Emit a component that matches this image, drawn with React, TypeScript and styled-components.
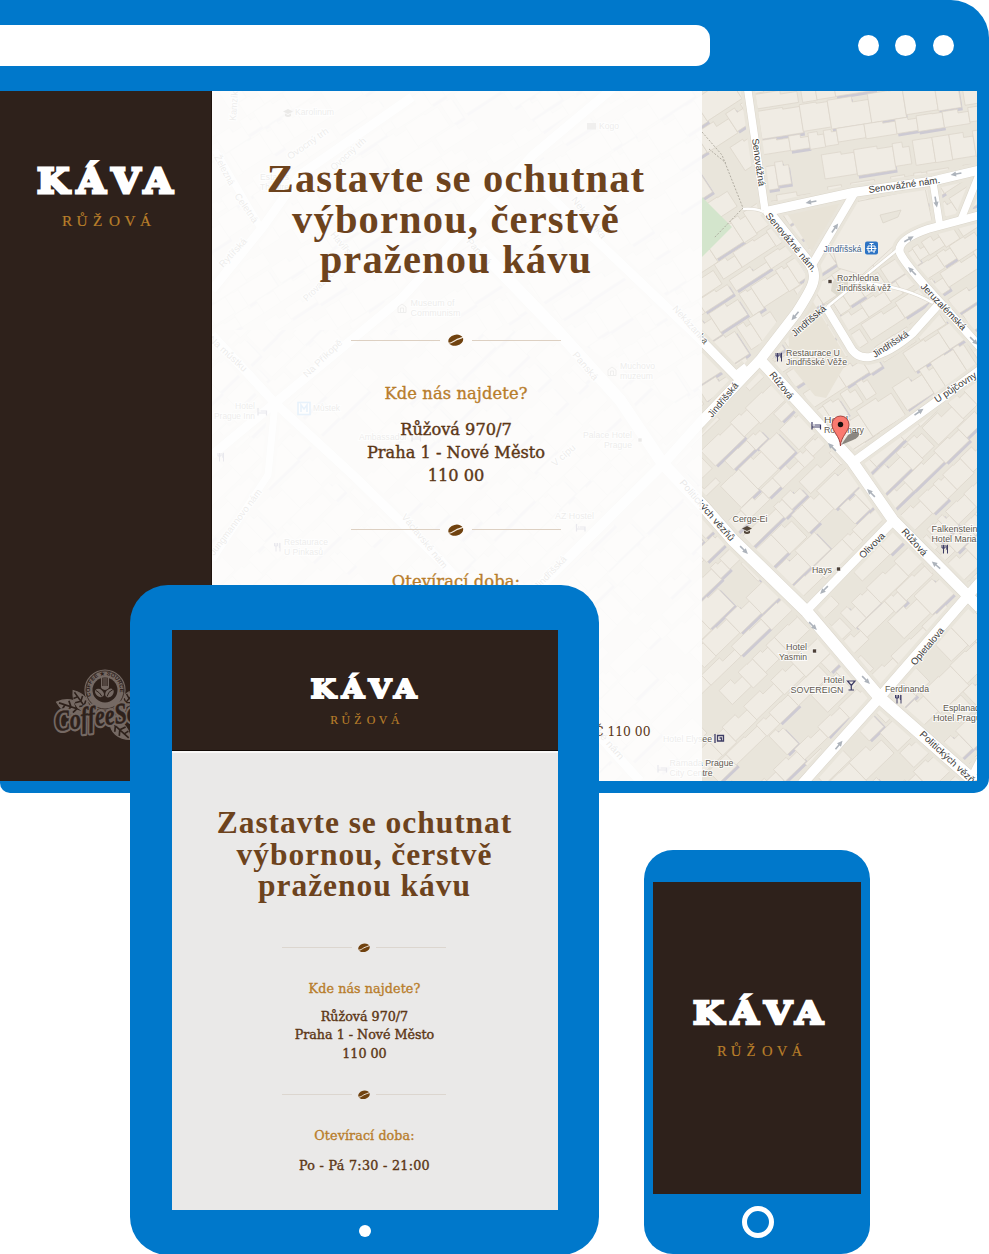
import React from 'react';
import styled, { createGlobalStyle } from 'styled-components';

const BLUE = '#0078cb';
const COFFEE = '#2e211b';
const SLAB = '"DejaVu Serif", serif';

const GlobalStyle = createGlobalStyle`
  * { box-sizing: border-box; }
  body { margin: 0; background: #fff; overflow: hidden; }
`;

const Stage = styled.main`
  position: relative;
  width: 989px;
  height: 1254px;
  overflow: hidden;
  font-family: "Liberation Serif", "Times New Roman", serif;
`;

/* ---------- desktop browser ---------- */

const Browser = styled.section`
  display: flex;
  flex-direction: column;
  width: 988.5px;
  height: 792.6px;
  padding-bottom: 11.6px;
  background: ${BLUE};
  border-radius: 0 38px 15px 10px;
`;

const Toolbar = styled.header`
  display: flex;
  flex: none;
  align-items: center;
  justify-content: space-between;
  height: 91px;
  padding: 0.6px 34.5px 0 0;
`;

const AddressBar = styled.div`
  width: 710px;
  height: 41px;
  background: #fff;
  border-radius: 0 14px 14px 0;
`;

const WindowDots = styled.div`
  display: flex;
  gap: 16.6px;
`;

const Dot = styled.span<{ $size: number }>`
  width: ${(p) => p.$size}px;
  height: ${(p) => p.$size}px;
  border-radius: 50%;
  background: #fff;
`;

const Viewport = styled.div`
  position: relative;
  display: flex;
  height: 690px;
  width: 977px;
  overflow: hidden;
`;

const Sidebar = styled.aside`
  display: flex;
  flex-direction: column;
  justify-content: space-between;
  width: 212px;
  padding: 66px 0 34px 36px;
  background: ${COFFEE};
  border-right: 1px solid #1f130d;
`;

const MapLayer = styled.svg`
  position: absolute;
  left: 212px;
  top: 0;
`;

const Panel = styled.article`
  position: relative;
  display: flex;
  flex-direction: column;
  align-items: center;
  width: 490px;
  padding: 68px 2px 0 0;
  background: rgba(254, 254, 254, 0.89);
`;

const FooterAddress = styled.p`
  position: absolute;
  right: 51.5px;
  bottom: 40px;
  margin: 0;
  font-family: ${SLAB};
  font-size: 12.3px;
  line-height: 18px;
  color: #5a3718;
  white-space: nowrap;
`;

/* ---------- shared type ---------- */

const Title = styled.h1<{ $small?: boolean }>`
  margin: 0;
  font-weight: 700;
  font-size: ${(p) => (p.$small ? 31.5 : 40.5)}px;
  line-height: ${(p) => (p.$small ? 31.3 : 40.5)}px;
  letter-spacing: ${(p) => (p.$small ? 0.95 : 1.15)}px;
  color: #6d431d;
  text-align: center;
  white-space: nowrap;
`;

const Subtitle = styled.h2<{ $small?: boolean }>`
  margin: 0;
  font-family: ${SLAB};
  font-weight: 400;
  font-size: ${(p) => (p.$small ? 12.7 : 16.3)}px;
  line-height: ${(p) => (p.$small ? 18 : 24)}px;
  letter-spacing: 0.1px;
  color: #b87d2b;
  -webkit-text-stroke: 0.35px #b87d2b;
  white-space: nowrap;
`;

const Details = styled.p<{ $small?: boolean; $top?: number; $spacing?: number }>`
  margin: ${(p) => p.$top ?? (p.$small ? 10 : 12)}px 0 0;
  font-family: ${SLAB};
  font-weight: 400;
  font-size: ${(p) => (p.$small ? 12.7 : 16.2)}px;
  line-height: ${(p) => (p.$small ? 18.2 : 23.3)}px;
  letter-spacing: ${(p) => p.$spacing ?? 0}px;
  color: #5c3716;
  -webkit-text-stroke: 0.4px #5c3716;
  text-align: center;
  white-space: nowrap;
`;

const DividerRow = styled.div<{ $small?: boolean; $before: number; $after: number }>`
  display: flex;
  flex: none;
  align-items: center;
  justify-content: space-between;
  width: ${(p) => (p.$small ? 164 : 210)}px;
  height: ${(p) => (p.$small ? 10 : 12)}px;
  margin: ${(p) => p.$before}px 0 ${(p) => p.$after}px;
`;

const Rule = styled.span<{ $small?: boolean }>`
  width: ${(p) => (p.$small ? 70 : 89)}px;
  height: 1px;
  background: ${(p) => (p.$small ? '#dcd6cf' : '#ddd0c2')};
`;

/* ---------- tablet ---------- */

const Tablet = styled.section`
  position: absolute;
  left: 129.7px;
  top: 585px;
  display: flex;
  flex-direction: column;
  align-items: center;
  width: 469.3px;
  height: 669.5px;
  padding: 45px 0 0 1.3px;
  background: ${BLUE};
  border-radius: 38px;
`;

const TabletScreen = styled.div`
  width: 386px;
  height: 580px;
  margin-bottom: 15px;
  background: #eae9e8;
`;

const TabletHeader = styled.header`
  display: flex;
  justify-content: center;
  height: 121px;
  padding-top: 39.5px;
  background: ${COFFEE};
  border-bottom: 1px solid #120a06;
`;

const TabletBody = styled.div`
  display: flex;
  flex-direction: column;
  align-items: center;
  height: 459px;
  padding: 54.4px 1px 0 0;
  border-top: 2px solid #f9f8f7;
`;

/* ---------- phone ---------- */

const Phone = styled.section`
  display: flex;
  flex-direction: column;
  align-items: center;
  width: 226px;
  height: 404px;
  margin: 57.4px 0 0 644px;
  padding-top: 32px;
  background: ${BLUE};
  border-radius: 29px;
`;

const PhoneScreen = styled.div`
  display: flex;
  justify-content: center;
  width: 208px;
  height: 312px;
  padding: 108px 0 0 6px;
  background: ${COFFEE};
`;

const HomeRing = styled.span`
  width: 32px;
  height: 32px;
  margin: 12px 0 0 1px;
  border: 5px solid #fff;
  border-radius: 50%;
`;

/* ---------- logos and icons ---------- */

const Logo = ({ width }: { width: number }) => (
  <svg width={width} height={(width * 72) / 142} viewBox="0 0 142 72" overflow="visible">
    <text
      x="0.9 36.4 67.4 96.3"
      y="35.600"
      transform="scale(1.12 1)"
      fontFamily='"DejaVu Serif", serif'
      fontWeight="700"
      fontSize="33.2"
      fill="#fff"
      stroke="#fff"
      strokeWidth="2.800"
    >
      KÁVA
    </text>
    <text
      x="26 40.5 57 73 88.5 104"
      y="69"
      fontFamily='"Liberation Serif", serif'
      fontSize="15.3"
      fill="#b97f2a"
      stroke="#b97f2a"
      strokeWidth="0.2"
    >
      RŮŽOVÁ
    </text>
  </svg>
);

const Bean = ({ width }: { width: number }) => (
  <svg width={width} height={width * 0.8} viewBox="0 0 15 12">
    <g transform="rotate(-14 7.5 6)">
      <ellipse cx="7.5" cy="6" rx="7.3" ry="5.3" fill="#70420f" />
      <path d="M0 7.200C3 8 5 6.600 7.300 6C10 5.200 12 5.600 15 5" fill="none" stroke="#f4ece2" strokeWidth="1.1" />
    </g>
  </svg>
);

const Divider = ({ small, before, after }: { small?: boolean; before: number; after: number }) => (
  <DividerRow $small={small} $before={before} $after={after}>
    <Rule $small={small} />
    <Bean width={small ? 12 : 15.5} />
    <Rule $small={small} />
  </DividerRow>
);

const Leaf = ({ x, y, angle, size }: { x: number; y: number; angle: number; size: number }) => (
  <g transform={`translate(${x} ${y}) rotate(${angle}) scale(${size})`}>
    <path d="M0 0C4 -7 14 -8 23 0C15 7 6 7 0 0Z" fill="#756963" stroke="#756963" />
    <path d="M2 0H21M6 0l2 -4M6 0l3 4M11 0l2 -5M11 0l3 4M16 0l1 -4" stroke={COFFEE} strokeWidth="1.4" fill="none" />
  </g>
);

const BadgeLogo = styled.svg`
  margin-left: 16px;
`;

const CoffeeSource = () => (
  <BadgeLogo width="106" height="78" viewBox="52 670 106 78">
    <Leaf x={84} y={712} angle={-162} size={1.25} />
    <Leaf x={88} y={712} angle={-126} size={1.1} />
    <Leaf x={110} y={722} angle={42} size={1.2} />
    <Leaf x={122} y={708} angle={-50} size={1} />
    <circle cx="105" cy="691" r="20.6" fill="#756963" />
    <circle cx="105" cy="691" r="19" fill="none" stroke={COFFEE} strokeWidth="0.8" />
    <circle cx="105" cy="691" r="12.5" fill={COFFEE} />
    <path id="badge-arc" d="M91.2 697A15 15 0 1 1 118.8 697" fill="none" />
    <text fontFamily='"Liberation Sans", sans-serif' fontWeight="700" fontSize="5.6" fill={COFFEE}>
      <textPath href="#badge-arc" textLength="55">COFFEE ★ SOURCE</textPath>
    </text>
    <path d="M101 679v9q0 2 4 3q4 -1 4 -3v-9h-1.300v8h-1.200v-8h-1v8h-1v-8h-1v8h-1.200v-8z" fill="#756963" />
    <ellipse cx="99.500" cy="694" rx="5" ry="3.600" transform="rotate(38 99.500 694)" fill="#756963" />
    <ellipse cx="109.500" cy="694" rx="5" ry="3.600" transform="rotate(-48 109.500 694)" fill="#756963" />
    <path d="M96 691.500q4 2 6 6M113 690.500q-5 2 -6 7" stroke={COFFEE} fill="none" />
    <g
      transform="rotate(-7 56 731)"
      fontFamily='"Liberation Serif", serif'
      fontStyle="italic"
      fontWeight="700"
      fontSize="29"
    >
      <text x="56" y="732" textLength="124" lengthAdjust="spacingAndGlyphs" stroke="#756963" strokeWidth="5" strokeLinejoin="round" fill="#756963">
        CoffeeSource
      </text>
      <text x="56" y="732" textLength="124" lengthAdjust="spacingAndGlyphs" stroke={COFFEE} strokeWidth="0.5" fill={COFFEE}>
        CoffeeSource
      </text>
    </g>
  </BadgeLogo>
);

/* ---------- city map ---------- */

const makeRandom = (seed: number) => {
  let state = seed;
  return () => {
    state = (state * 16807) % 2147483647;
    return state / 2147483647;
  };
};

interface Quarter {
  clip: string;
  angle: number;
  cx: number;
  cy: number;
  radius: number;
  seed: number;
}

const quarters: Quarter[] = [
  { clip: 'M750 91H977V168L768 209Z', angle: -9, cx: 868, cy: 150, radius: 140, seed: 71 },
  { clip: 'M212 91H750L765 210L812 275L702 420L560 330L212 330Z', angle: -33, cx: 480, cy: 210, radius: 330, seed: 33 },
  { clip: 'M768 211L977 170V372L853 460L762 360L812 285Z', angle: -33, cx: 870, cy: 310, radius: 150, seed: 901 },
  { clip: 'M212 330H560L702 420L762 360L856 463L977 372V781H212Z', angle: -44, cx: 600, cy: 570, radius: 430, seed: 512 },
];

const Buildings = ({ q, index }: { q: Quarter; index: number }) => {
  const random = makeRandom(q.seed);
  const shapes: React.ReactNode[] = [];
  for (let y = -q.radius; y < q.radius; ) {
    const rowHeight = 15 + random() * 16;
    for (let x = -q.radius - random() * 20; x < q.radius; ) {
      const w = 11 + random() * 32;
      const h = rowHeight - random() * 4;
      const notch = random() * 6;
      const kind = random();
      if (kind > 0.1) {
        const d = `M${x.toFixed(1)} ${y.toFixed(1)}h${(w * 0.6).toFixed(1)}v${notch.toFixed(1)}h${(w * 0.4).toFixed(1)}v${(h - notch).toFixed(1)}h${(-w).toFixed(1)}z`;
        if (kind > 0.6) {
          shapes.push(<path key={`s${x}${y}`} d={d} transform="translate(1 3)" fill="#cdcad3" />);
        }
        shapes.push(<path key={`b${x}${y}`} d={d} fill="#f0ece4" stroke="#dcd6ca" strokeWidth="0.7" />);
      }
      x += w + (random() > 0.8 ? 4 : 0);
    }
    y += rowHeight + (random() > 0.65 ? 6 : 0);
  }
  return (
    <g clipPath={`url(#quarter-${index})`}>
      <clipPath id={`quarter-${index}`}>
        <path d={q.clip} />
      </clipPath>
      <g transform={`translate(${q.cx} ${q.cy}) rotate(${q.angle})`}>{shapes}</g>
    </g>
  );
};

const roads: { d: string; w: number }[] = [
  { d: 'M747.5 88L765 210', w: 7.5 },
  { d: 'M764 212Q810 202 853 192.500L933 181L980 170', w: 9 },
  { d: 'M933 182L940 227', w: 7 },
  { d: 'M980 172L960 222', w: 7 },
  { d: 'M767 210L810 264Q818 275 810 290Q806 298 797 312L760 360L700 423L663 464L543 583L440 690', w: 10 },
  { d: 'M855 192L812 265', w: 8 },
  { d: 'M980 215L928 229Q896 240 900 253Q906 266 947 310L980 347', w: 8 },
  { d: 'M938 305L913 333Q890 353 870 357Q856 359 849 345L826 307', w: 8 },
  { d: 'M760 360L852 461L893 520L980 608', w: 11 },
  { d: 'M747 367L736 376L700 339L533 180', w: 9 },
  { d: 'M852 463L980 370', w: 8.5 },
  { d: 'M480 250L557 330L620 400L663 464L705 508L733 540L807 612L880 698L980 786', w: 12 },
  { d: 'M893 521L806 611', w: 8.5 },
  { d: 'M980 582L880 697L802 784', w: 10 },
  { d: 'M980 760L968 784', w: 7 },
  { d: 'M613 88L533 155L400 300L275 403L212 455', w: 9 },
  { d: 'M412 97L300 175L262 228L212 290', w: 9 },
  { d: 'M212 335L275 403L355 477L440 560L640 781', w: 9 },
  { d: 'M215 150L262 230', w: 7 },
  { d: 'M275 403L268 475L212 560', w: 7 },
];

const arrows: [number, number, number][] = [
  [811, 202, 170], [956, 174, 170], [936, 202, 80], [835, 228, -55], [909, 239, -30],
  [912, 271, 225], [795, 316, 130], [919, 412, -35], [832, 447, 225], [871, 493, 225],
  [744, 550, 45], [824, 590, 135], [813, 626, 45], [866, 680, 45], [936, 565, 220],
  [839, 745, -50], [974, 341, 45],
];

interface MapText {
  t: string;
  x: number;
  y: number;
  l: number;
  r?: number;
  c?: string;
}

const street = '#3b3a38';
const labels: MapText[] = [
  { t: 'Senovážná', x: 752, y: 139, l: 48, r: 82, c: street },
  { t: 'Senovážné nám.', x: 869, y: 193, l: 72, r: -8, c: street },
  { t: 'Senovážné nám.', x: 765, y: 216, l: 74, r: 50, c: street },
  { t: 'Jindřišská', x: 823.5, y: 251.500, l: 38, c: '#416188' },
  { t: 'Rozhledna', x: 837, y: 281, l: 42 },
  { t: 'Jindřišská věž', x: 837, y: 290.500, l: 54 },
  { t: 'Jindřišská', x: 795, y: 337, l: 42, r: -41, c: street },
  { t: 'Jindřišská', x: 875, y: 358, l: 41, r: -33, c: street },
  { t: 'Jeruzalémská', x: 920, y: 287, l: 61, r: 46, c: street },
  { t: 'Restaurace U', x: 786, y: 355.5, l: 54 },
  { t: 'Jindřišské Věže', x: 786, y: 365, l: 61 },
  { t: 'Jindřišská', x: 712, y: 418, l: 42, r: -50, c: street },
  { t: 'Růžová', x: 769, y: 375, l: 32, r: 51, c: street },
  { t: 'U půjčovny', x: 937, y: 403, l: 48, r: -33, c: street },
  { t: 'Hotel', x: 824, y: 423, l: 24 },
  { t: 'Rosemary', x: 824, y: 433, l: 40 },
  { t: 'Cerge-Ei', x: 732.5, y: 522, l: 35 },
  { t: 'Falkensteiner', x: 931.500, y: 532, l: 54 },
  { t: 'Hotel Maria', x: 931.500, y: 542, l: 45 },
  { t: 'Hays', x: 812, y: 572.5, l: 20 },
  { t: 'Olivova', x: 863, y: 559, l: 32, r: -45, c: street },
  { t: 'Růžová', x: 901, y: 532, l: 33, r: 48, c: street },
  { t: 'Politických vězňů', x: 679, y: 483, l: 78, r: 49, c: street },
  { t: 'Hotel', x: 786, y: 650, l: 21 },
  { t: 'Yasmin', x: 779, y: 660, l: 28 },
  { t: 'Hotel', x: 823.500, y: 683, l: 21 },
  { t: 'SOVEREIGN', x: 790.500, y: 692.500, l: 53 },
  { t: 'Ferdinanda', x: 885, y: 692, l: 44 },
  { t: 'Opletalova', x: 915, y: 666, l: 46, r: -50, c: street },
  { t: 'Esplanade', x: 943, y: 710.500, l: 42 },
  { t: 'Hotel Prague', x: 933, y: 720.500, l: 53 },
  { t: 'Politických vězňů', x: 919, y: 735, l: 77, r: 43, c: street },
  { t: 'Hotel Elysee', x: 663, y: 742, l: 49 },
  { t: 'Ramada Prague', x: 669.500, y: 766, l: 64 },
  { t: 'City Centre', x: 669.500, y: 775.5, l: 43 },
  { t: 'Karolinum', x: 295, y: 115, l: 39 },
  { t: 'Kogo', x: 599, y: 129, l: 20 },
  { t: 'Ovocný trh', x: 290, y: 160, l: 48, r: -35 },
  { t: 'Ovocný trh', x: 334, y: 171, l: 44, r: -42 },
  { t: 'Estates', x: 260, y: 180, l: 29 },
  { t: 'Theatre', x: 260, y: 189.500, l: 29 },
  { t: 'Kamzíkova', x: 236, y: 121, l: 44, r: -86 },
  { t: 'Železná', x: 214, y: 157, l: 33, r: 62 },
  { t: 'Celetná', x: 234, y: 196, l: 34, r: 55 },
  { t: 'Rytířská', x: 223, y: 268, l: 36, r: -47 },
  { t: 'Havířská', x: 330, y: 235, l: 36, r: 50 },
  { t: 'Provaznická', x: 307, y: 302, l: 48, r: -45 },
  { t: 'Museum of', x: 410.500, y: 306, l: 44 },
  { t: 'Communism', x: 410.500, y: 316, l: 50 },
  { t: 'Nekázanka', x: 571, y: 200, l: 50, r: 52 },
  { t: 'Nekázanka', x: 672, y: 309, l: 48, r: 48 },
  { t: 'Panská', x: 466, y: 242, l: 32, r: 48 },
  { t: 'Panská', x: 572, y: 355, l: 34, r: 50 },
  { t: 'Na můstku', x: 208, y: 340, l: 48, r: 42 },
  { t: 'Na Příkopě', x: 307, y: 378, l: 50, r: -44 },
  { t: 'Hotel', x: 235, y: 408.500, l: 20 },
  { t: 'Prague Inn', x: 214, y: 418.500, l: 41 },
  { t: 'Můstek', x: 313, y: 411, l: 27 },
  { t: 'Muchovo', x: 620, y: 368.500, l: 35 },
  { t: 'muzeum', x: 620, y: 378.500, l: 33 },
  { t: 'Ambassador', x: 359, y: 440, l: 48 },
  { t: 'Palace Hotel', x: 583, y: 438, l: 49 },
  { t: 'Prague', x: 604, y: 447.500, l: 28 },
  { t: 'V cípu', x: 555, y: 467, l: 28, r: -41 },
  { t: 'AZ Hostel', x: 555, y: 519, l: 39 },
  { t: 'Jungmannovo nám', x: 214, y: 556, l: 80, r: -53 },
  { t: 'Restaurace', x: 284, y: 544.500, l: 44 },
  { t: 'U Pinkasů', x: 284, y: 554.500, l: 39 },
  { t: 'Václavské nám', x: 401, y: 517, l: 67, r: 51 },
  { t: 'Jindřišská', x: 538, y: 590, l: 42, r: -46 },
  { t: 'Václavské nám', x: 570, y: 703, l: 76, r: 49 },
];

const Fork = ({ x, y }: { x: number; y: number }) => (
  <path
    d={`M${x} ${y}v3h3v-3M${x + 1.5} ${y}v8.500M${x + 5.500} ${y + 8.500}v-8.500l-0.700 0.500v4h0.700`}
    fill="none"
    stroke="#3e3d66"
    strokeWidth="1"
  />
);

const Bed = ({ x, y }: { x: number; y: number }) => (
  <path
    d={`M${x} ${y}v7.500M${x} ${y + 5}h8.500v2.500M${x + 3} ${y + 3}h5.5v2M${x + 1.500} ${y + 3}h1`}
    fill="none"
    stroke="#3e3d66"
    strokeWidth="1.2"
  />
);

const Cap = ({ x, y }: { x: number; y: number }) => (
  <path
    d={`M${x} ${y + 2.5}l5 -2.500l5 2.500l-5 2.500zM${x + 2} ${y + 4.500}v2.500q3 2 6 0v-2.500l-3 1.500z`}
    fill="#54483c"
  />
);

const Square = ({ x, y }: { x: number; y: number }) => (
  <rect x={x - 2} y={y - 2} width="4" height="4" fill="#4c3f36" stroke="#fff" strokeWidth="0.6" />
);

const Museum = ({ x, y }: { x: number; y: number }) => (
  <path
    d={`M${x} ${y + 3}l4 -3l4 3v5.500h-8zM${x + 2.500} ${y + 8}v-4h3v4`}
    fill="none"
    stroke="#6d655c"
    strokeWidth="0.9"
  />
);

const CityMap = () => (
  <MapLayer width="765" height="690" viewBox="212 91 765 690">
    <rect x="212" y="91" width="765" height="690" fill="#e9e5db" />
    {quarters.map((q, i) => (
      <Buildings key={q.seed} q={q} index={i} />
    ))}
    <path d="M702 197L732 227L702 257Z" fill="#d3e5cc" />
    <path d="M782 206L845 198L812 252Z M788 328L812 300L848 360L826 398L815 396L790 365Z" fill="#e8e3d7" />
    <path d="M829 238L855 202L925 188L933 225L897 243L862 275L838 268Z" fill="#f0ece4" stroke="#d9d3c7" strokeWidth="0.7" />
    <path d="M880 215L901 210L898 217L883 223Z" fill="#e9e5db" stroke="#d9d3c7" strokeWidth="0.7" />
    <path d="M832 283l8 -9l8 6v12l-9 5l-8 -6z" fill="#dedace" />
    <path d="M702 132L722 155L743 208L714 238M709 149L726 163" fill="none" stroke="#aaa69b" strokeWidth="0.9" strokeDasharray="2 1.500" />
    {roads.map((r) => (
      <path key={`edge${r.d}`} d={r.d} fill="none" stroke="#e9e5db" strokeWidth={r.w + 7} />
    ))}
    {roads.map((r) => (
      <path key={`line${r.d}`} d={r.d} fill="none" stroke="#dad5ca" strokeWidth={r.w + 1} />
    ))}
    <path d="M827 307L897 250M867 283Q905 287 933 303M743 209Q755 208 764 212" fill="none" stroke="#dad5ca" strokeWidth="3.6" />
    <path d="M827 307L897 250M867 283Q905 287 933 303M743 209Q755 208 764 212" fill="none" stroke="#fff" strokeWidth="2.500" />
    {roads.map((r) => (
      <path key={r.d} d={r.d} fill="none" stroke="#fff" strokeWidth={r.w} />
    ))}
    {arrows.map(([x, y, a]) => (
      <path
        key={`${x}-${y}`}
        d="M-5.5 -0.800H0V-2.600L5.500 0L0 2.600V0.800H-5.500Z"
        transform={`translate(${x} ${y}) rotate(${a})`}
        fill="#adb3bb"
      />
    ))}
    {labels.map((m) => (
      <text
        key={`${m.t}-${m.x}-${m.y}`}
        transform={`translate(${m.x} ${m.y}) rotate(${m.r ?? 0})`}
        textLength={m.l}
        lengthAdjust="spacingAndGlyphs"
        fontFamily='"Liberation Sans", Arial, sans-serif'
        fontSize={m.r ? 9.6 : 9}
        fill={m.c ?? '#625a50'}
        stroke="#fff"
        strokeOpacity="0.8"
        strokeWidth="2"
        paintOrder="stroke"
      >
        {m.t}
      </text>
    ))}
    <rect x="865" y="241.500" width="13" height="13" rx="2" fill="#2d74c4" />
    <path d="M869.500 243.500h4M871.500 243.500v2M868 246h7v5h-7zM868 248.500h7M871.500 246v5M866.500 248.500h10M869 251v2M874 251v2" stroke="#fff" fill="none" strokeWidth="1" />
    <Square x={830} y={281.500} />
    <Square x={838.500} y={569} />
    <Square x={814.500} y={651} />
    <Square x={640} y={440} />
    <Fork x={776} y={353} />
    <Fork x={942} y={545} />
    <Fork x={895.500} y={695} />
    <Fork x={218} y={453} />
    <Fork x={274.500} y={543} />
    <Bed x={812} y={422} />
    <Bed x={258} y={408} />
    <Bed x={412} y={434} />
    <Bed x={576.500} y={524} />
    <Bed x={658} y={765} />
    <Cap x={742} y={526} />
    <Cap x={283} y={109} />
    <Museum x={398} y={304} />
    <Museum x={608} y={367} />
    <path d="M847.500 681h7.500l-3.700 4.500zM851.300 685v5M848.500 690h5.500" fill="none" stroke="#3e3d66" strokeWidth="1.2" />
    <path d="M715 734v9M717.500 735.500h6v5.500h-6zM719.500 738h2v3" fill="none" stroke="#3e3d66" strokeWidth="1.300" />
    <rect x="587" y="123" width="9" height="6.500" fill="#7d766d" />
    <rect x="298" y="402.500" width="12" height="12" fill="#fff" stroke="#3a8fdd" strokeWidth="1.600" />
    <path d="M301 412v-7l3 4l3 -4v7" fill="none" stroke="#3a8fdd" strokeWidth="1.600" />
    <path d="M841 445L848 435Q855 430 859 433Q860 437 853 440Z" fill="#55504a" opacity="0.65" />
    <path d="M840.500 446C840 436 832 431.500 832 424.500A8.500 8.500 0 0 1 849 424.500C849 431.500 841 436 840.500 446Z" fill="#fa7a70" stroke="#9b3a35" strokeWidth="0.9" />
    <circle cx="840.500" cy="424.500" r="2.700" fill="#16100e" />
  </MapLayer>
);

const Headline = ({ small }: { small?: boolean }) => (
  <Title $small={small}>
    Zastavte se ochutnat
    <br />
    výbornou, čerstvě
    <br />
    praženou kávu
  </Title>
);

const Address = ({ small }: { small?: boolean }) => (
  <Details $small={small}>
    Růžová 970/7
    <br />
    Praha 1 - Nové Město
    <br />
    110 00
  </Details>
);

export default function App() {
  return (
    <Stage>
      <GlobalStyle />
      <Browser>
        <Toolbar>
          <AddressBar />
          <WindowDots>
            <Dot $size={21} />
            <Dot $size={21} />
            <Dot $size={21} />
          </WindowDots>
        </Toolbar>
        <Viewport>
          <CityMap />
          <Sidebar>
            <Logo width={142} />
            <CoffeeSource />
          </Sidebar>
          <Panel>
            <Headline />
            <Divider before={53.5} after={35.5} />
            <Subtitle>Kde nás najdete?</Subtitle>
            <Address />
            <Divider before={36.5} after={34} />
            <Subtitle>Otevírací doba:</Subtitle>
            <FooterAddress>PSČ 110 00</FooterAddress>
          </Panel>
        </Viewport>
      </Browser>
      <Phone>
        <PhoneScreen>
          <Logo width={136} />
        </PhoneScreen>
        <HomeRing />
      </Phone>
      <Tablet>
        <TabletScreen>
          <TabletHeader>
            <Logo width={110.500} />
          </TabletHeader>
          <TabletBody>
            <Headline small />
            <Divider small before={41.2} after={27.8} />
            <Subtitle $small>Kde nás najdete?</Subtitle>
            <Address small />
            <Divider small before={26.700} after={27.8} />
            <Subtitle $small>Otevírací doba:</Subtitle>
            <Details $small $top={12} $spacing={0.3}>
              Po - Pá 7:30 - 21:00
            </Details>
          </TabletBody>
        </TabletScreen>
        <Dot $size={12} />
      </Tablet>
    </Stage>
  );
}
